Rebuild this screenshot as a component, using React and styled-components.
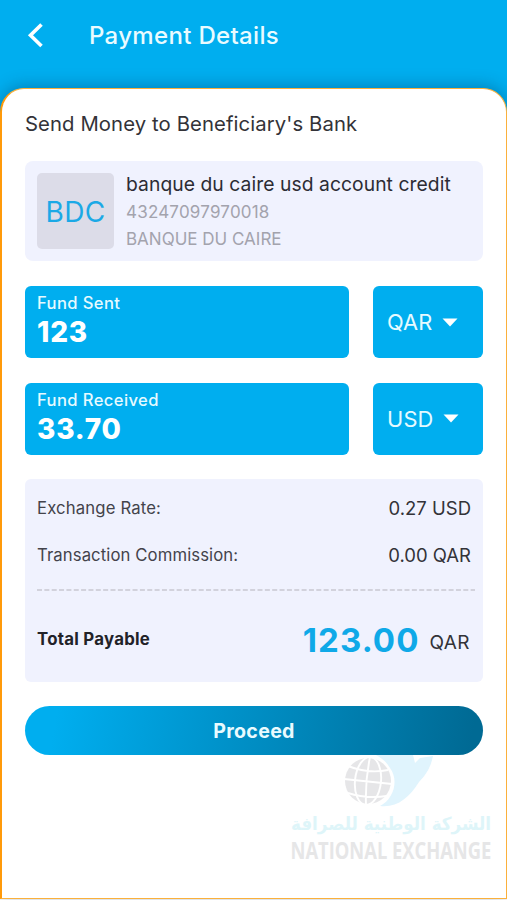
import React from "react";
import styled, { createGlobalStyle } from "styled-components";

const GlobalStyle = createGlobalStyle`
  * { box-sizing: border-box; }
  body { margin: 0; background: #00aeef; font-family: Inter, "Noto Sans", sans-serif; }
`;

const Screen = styled.main`
  display: flex;
  flex-direction: column;
  width: 507px;
  height: 900px;
  background: linear-gradient(#00aeef 160px, #fff 160px);
  overflow: hidden;
`;

const Text = styled.span`
  display: block;
  white-space: pre;
  font-size: ${(p) => p.$size}px;
  font-weight: ${(p) => p.$weight || 400};
  letter-spacing: ${(p) => p.$track || 0}px;
  line-height: ${(p) => p.$line || 24}px;
  color: ${(p) => p.$color || "#333338"};
`;

const Header = styled.header`
  display: flex;
  align-items: center;
  flex: none;
  height: 88px;
  padding: 0 0 16px 27px;
  gap: 44px;
  background: #00aeef;
`;

const BackButton = styled.button`
  display: flex;
  width: 18px;
  height: 26px;
  padding: 0;
  border: 0;
  background: none;
`;

const Sheet = styled.section`
  display: flex;
  flex-direction: column;
  flex: none;
  height: 811px;
  padding: 23px 23px 0 23px;
  background: #fff;
  border: 1px solid #fbb03b;
  border-left: 2px solid #ff9a0a;
  border-radius: 24px 24px 0 0;
  box-shadow: 0 -2px 16px rgba(0, 50, 90, 0.35);
`;

const Beneficiary = styled.div`
  display: flex;
  gap: 12px;
  height: 100px;
  margin-top: 25px;
  padding: 12px;
  background: #f0f2fe;
  border-radius: 8px;
`;

const Monogram = styled.div`
  display: flex;
  align-items: center;
  justify-content: center;
  width: 77px;
  height: 76px;
  padding-top: 2px;
  background: #dcdce8;
  border-radius: 5px;
`;

const Details = styled.div`
  display: flex;
  flex-direction: column;
`;

const Amounts = styled.div`
  display: flex;
  flex-direction: column;
  gap: 24.5px;
  margin-top: 25px;
`;

const AmountRow = styled.div`
  display: flex;
  gap: 24px;
  height: 72px;
`;

const AmountField = styled.div`
  width: 324px;
  padding: 5px 12px;
  background: #00aeef;
  border-radius: 6px;
`;

const CurrencySelect = styled.button`
  display: flex;
  align-items: center;
  gap: 9px;
  width: 110px;
  padding: 0 0 0 14px;
  border: 0;
  background: #00aeef;
  border-radius: 6px;
  font-family: inherit;
`;

const Summary = styled.div`
  height: 203px;
  margin-top: 24.5px;
  padding: 17px 12px 0;
  background: #f0f2fe;
  border-radius: 6px;
`;

const SummaryRow = styled.div`
  display: flex;
  justify-content: space-between;
  height: 24px;
  margin-bottom: ${(p) => p.$after}px;
`;

const DashedRule = styled.svg`
  display: block;
  width: 438px;
  height: 2px;
`;

const TotalRow = styled.div`
  display: flex;
  justify-content: space-between;
  margin-top: 28px;
`;

const TotalAmount = styled.div`
  display: flex;
  gap: 10px;
  margin-right: 1px;
`;

const ProceedButton = styled.button`
  display: flex;
  align-items: center;
  justify-content: center;
  flex: none;
  height: 49px;
  margin-top: 24px;
  padding: 1px 0 0;
  border: 0;
  border-radius: 25px;
  background: linear-gradient(100deg, #00aeef 7%, #006a94 97%);
  font-family: inherit;
`;

const Watermark = styled.div`
  display: flex;
  flex-direction: column;
  align-self: flex-end;
  width: 207px;
  margin-right: -12px;
`;

const Emblem = styled.svg`
  display: block;
  width: 100px;
  height: 54px;
  margin-left: 49px;
`;

const WatermarkLabel = styled.svg`
  display: block;
  width: 207px;
  height: ${(p) => p.$height}px;
  overflow: visible;
`;

function AmountEntry({ label, value, currency }) {
  return (
    <AmountRow>
      <AmountField>
        <Text $size={16.6} $weight={500} $track={0.38} $color="#e6faff">{label}</Text>
        <Text $size={28} $weight={800} $track={0.8} $line={34} $color="#fff">{value}</Text>
      </AmountField>
      <CurrencySelect>
        <Text $size={21.8} $track={0.2} $color="#e6faff">{currency}</Text>
        <svg width="16" height="9" viewBox="0 0 16 9">
          <path d="M.5 .5H15.5L8 8.5Z" fill="#fff" />
        </svg>
      </CurrencySelect>
    </AmountRow>
  );
}

export default function App() {
  return (
    <Screen>
      <GlobalStyle />
      <Header>
        <BackButton aria-label="Back">
          <svg width="18" height="26" viewBox="0 0 18 26">
            <path d="M14.5 1.5L3.5 12.3L14.5 23" fill="none" stroke="#fff" strokeWidth="3.6" />
          </svg>
        </BackButton>
        <Text $size={24} $weight={500} $track={0.33} $color="#e9fbff">Payment Details</Text>
      </Header>
      <Sheet>
        <Text $size={20.3} $track={0.1}>Send Money to Beneficiary's Bank</Text>
        <Beneficiary>
          <Monogram>
            <Text $size={28} $track={0.4} $line={26} $color="#1ba9e6">BDC</Text>
          </Monogram>
          <Details>
            <Text $size={19.3} $track={0.06} $line={22} $color="#2c2c34">banque du caire usd account credit</Text>
            <Text $size={17} $track={0.2} $line={34} $color="#a3a3ad">43247097970018</Text>
            <Text $size={17} $track={0} $line={20} $color="#a3a3ad">BANQUE DU CAIRE</Text>
          </Details>
        </Beneficiary>
        <Amounts>
          <AmountEntry label="Fund Sent" value="123" currency="QAR" />
          <AmountEntry label="Fund Received" value="33.70" currency="USD" />
        </Amounts>
        <Summary>
          <SummaryRow $after={22.5}>
            <Text $size={16.7} $track={0.15} $color="#43434b">Exchange Rate:</Text>
            <Text $size={18.5}>0.27 USD</Text>
          </SummaryRow>
          <SummaryRow $after={22.5}>
            <Text $size={16.7} $track={0.1} $color="#43434b">Transaction Commission:</Text>
            <Text $size={18.5}>0.00 QAR</Text>
          </SummaryRow>
          <DashedRule>
            <line x1="0" y1="1" x2="438" y2="1" stroke="#d2d2dc" strokeWidth="2" strokeDasharray="5 2.35" />
          </DashedRule>
          <TotalRow>
            <Text $size={16.8} $weight={700} $track={0.27} $line={40} $color="#222228">Total Payable</Text>
            <TotalAmount>
              <Text $size={33} $weight={700} $track={1.1} $line={42} $color="#0fa9e8">123.00</Text>
              <Text $size={19} $track={0.4} $line={47}>QAR</Text>
            </TotalAmount>
          </TotalRow>
        </Summary>
        <ProceedButton>
          <Text $size={19.6} $weight={700} $track={0.3} $color="#e9fbff">Proceed</Text>
        </ProceedButton>
        <Watermark>
          <Emblem viewBox="337 755 100 54">
            <path d="M376 755H413L415 763L420 758L433 756C431 766 427 774 419 782C409 798 397 808 380 806C394 799 399 780 390 768C386 761 381 758 376 755Z" fill="#e0f4fd" />
            <circle cx="368" cy="781" r="23" fill="#e6e6e8" />
            <g fill="none" stroke="#fff" strokeWidth="1.9">
              <path d="M370 757Q365 781 366 805M344 779L392 784M348 766Q368 774 388 770M348 793Q366 799 387 796" />
              <ellipse cx="368" cy="781" rx="13" ry="24" transform="rotate(6 368 781)" />
            </g>
          </Emblem>
          <WatermarkLabel $height={26}>
            <text x="103" y="21" textAnchor="middle" direction="rtl" textLength="200" lengthAdjust="spacingAndGlyphs" fontFamily="DejaVu Sans, sans-serif" fontWeight="700" fontSize="18" fill="#def5f9">الشركة الوطنية للصرافة</text>
          </WatermarkLabel>
          <WatermarkLabel $height={40}>
            <g transform="translate(2.5 24) scale(0.8 1)">
              <text textLength="251" lengthAdjust="spacingAndGlyphs" fontFamily="Open Sans, sans-serif" fontWeight="700" fontSize="24" fill="#e6e6e7">NATIONAL EXCHANGE</text>
            </g>
          </WatermarkLabel>
        </Watermark>
      </Sheet>
    </Screen>
  );
}
